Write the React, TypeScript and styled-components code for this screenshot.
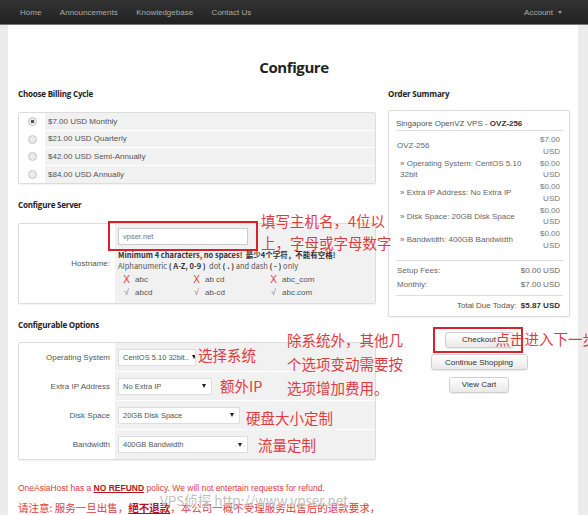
import React from 'react'
import styled, { createGlobalStyle } from 'styled-components'

const GlobalStyle = createGlobalStyle`
  html, body {
    margin: 0;
    padding: 0;
    background: #ececec;
    overflow: hidden;
    font-family: "Liberation Sans", Arial, sans-serif;
  }
`

const CJK = `"Noto Sans CJK SC", "Liberation Sans", sans-serif`

const Nav = styled.nav`
  height: 24px;
  background: linear-gradient(#333, #222);
  border-bottom: 1px solid #777;
  display: flex;
  align-items: center;
  padding: 0 26px 0 20px;
  gap: 18.5px;
  font-size: 8px;
  color: #aaa;
`

const NavItem = styled.span<{ $push?: boolean }>`
  margin-left: ${({ $push }) => ($push ? 'auto' : '0')};
  display: flex;
  align-items: center;
  gap: 5px;
`

const Caret = styled.span`
  width: 0;
  height: 0;
  border-left: 2.5px solid transparent;
  border-right: 2.5px solid transparent;
  border-top: 3px solid #999;
`

const Panel = styled.main`
  position: relative;
  width: 570px;
  margin-left: 8px;
  background: #fff;
  padding: 0 8px 40px 10px;
  box-sizing: border-box;
`

const Title = styled.h1`
  margin: 0;
  padding-top: 32px;
  text-align: center;
  font-family: "Open Sans", sans-serif;
  font-size: 15px;
  line-height: 20px;
  font-weight: 700;
  letter-spacing: -0.4px;
  color: #222;
`

const Columns = styled.div`
  display: grid;
  grid-template-columns: 358px 182px;
  column-gap: 12px;
  margin-top: 11px;
  align-items: start;
`

const Column = styled.div`
  display: flex;
  flex-direction: column;
`

const SectionTitle = styled.h3<{ $gap?: number }>`
  margin: ${({ $gap }) => $gap ?? 0}px 0 0;
  font-family: "Open Sans", sans-serif;
  font-size: 8px;
  line-height: 12px;
  font-weight: 700;
  letter-spacing: -0.2px;
  color: #222;
`

const Box = styled.div<{ $gap: number }>`
  position: relative;
  margin-top: ${({ $gap }) => $gap}px;
  border: 1px solid #dcdcdc;
  border-radius: 2px;
  box-shadow: 0 1px 2px rgba(0, 0, 0, 0.06);
  background: #fff;
`

const Row = styled.div<{ $h: number; $side: number }>`
  display: grid;
  grid-template-columns: ${({ $side }) => $side}px 1fr;
  height: ${({ $h }) => $h}px;
`

const SideCell = styled.div<{ $align?: string }>`
  display: flex;
  align-items: center;
  justify-content: ${({ $align }) => $align ?? 'flex-end'};
  padding-right: ${({ $align }) => ($align ? 0 : 5)}px;
  font-size: 8px;
  color: #555;
`

const MainCell = styled.div<{ $last?: boolean }>`
  background: #f1f1f1;
  border-bottom: ${({ $last }) => ($last ? 'none' : '1px solid #fff')};
  display: flex;
  align-items: center;
  padding-left: 3px;
  font-size: 8px;
  color: #555;
  gap: 6px;
`

const Radio = styled.span<{ $on?: boolean }>`
  width: 7px;
  height: 7px;
  border-radius: 50%;
  border: 1px solid #c4c4c4;
  background: radial-gradient(circle, ${({ $on }) => ($on ? '#555 0 1.6px, #e8e8e8 2px' : '#eee 0, #e4e4e4 100%')});
`

const HostCell = styled.div`
  background: #f1f1f1;
  padding: 4px 0 0 3px;
  font-size: 8px;
  color: #555;
`

const TextInput = styled.div`
  width: 130px;
  height: 17px;
  box-sizing: border-box;
  border: 1px solid #ccc;
  background: #fff;
  display: flex;
  align-items: center;
  padding-left: 4px;
  color: #777;
  font-size: 7.5px;
  margin-bottom: 4px;
`

const Hint = styled.div<{ $bold?: boolean }>`
  line-height: 11px;
  font-weight: ${({ $bold }) => ($bold ? 700 : 400)};
  color: ${({ $bold }) => ($bold ? '#333' : '#555')};
  font-family: ${CJK};
  font-size: 7.5px;
  b { color: #333; }
`

const Rules = styled.div`
  display: grid;
  grid-template-columns: 70px 77px auto;
  margin-top: 2px;
  line-height: 13px;
`

const Rule = styled.span`
  display: flex;
  align-items: center;
  font-size: 8px;
  color: #555;
`

const Mark = styled.span<{ $bad?: boolean }>`
  width: 17px;
  text-align: center;
  color: ${({ $bad }) => ($bad ? '#e03a3a' : '#888')};
  font-size: ${({ $bad }) => ($bad ? 10 : 9)}px;
`

const Select = styled.div<{ $w: number }>`
  width: ${({ $w }) => $w}px;
  height: 17px;
  box-sizing: border-box;
  border: 1px solid #ddd;
  background: #fff;
  display: flex;
  align-items: center;
  justify-content: space-between;
  gap: 3px;
  padding: 0 5px 0 4px;
  font-size: 7.5px;
  color: #555;
  white-space: nowrap;
  overflow: hidden;
  flex-shrink: 0;
`

const SelectArrow = styled.span`
  width: 0;
  height: 0;
  flex-shrink: 0;
  border-left: 2.5px solid transparent;
  border-right: 2.5px solid transparent;
  border-top: 4px solid #222;
`

const Note = styled.span<{ $shift?: number; $lead?: number }>`
  font-family: ${CJK};
  font-size: 14.5px;
  line-height: 24px;
  color: #df3b3f;
  white-space: nowrap;
  margin-left: ${({ $lead }) => $lead ?? 0}px;
  position: relative;
  top: ${({ $shift }) => $shift ?? 0}px;
`

const NoteBlock = styled.div<{ $x: number; $y: number; $lh: number }>`
  position: absolute;
  left: ${({ $x }) => $x}px;
  top: ${({ $y }) => $y}px;
  z-index: 3;
  display: flex;
  flex-direction: column;
  font-family: ${CJK};
  font-size: 14.5px;
  line-height: ${({ $lh }) => $lh}px;
  color: #df3b3f;
  white-space: nowrap;
`

const RedFrame = styled.div<{ $x: number; $y: number; $w: number; $h: number }>`
  position: absolute;
  left: ${({ $x }) => $x}px;
  top: ${({ $y }) => $y}px;
  width: ${({ $w }) => $w}px;
  height: ${({ $h }) => $h}px;
  border: 2px solid #d6232a;
  box-sizing: border-box;
  z-index: 3;
`

const Summary = styled.div`
  padding: 0 6px 0 7px;
  font-size: 8px;
  color: #666;
`

const SummaryHead = styled.div`
  padding: 8px 0 0 0;
  height: 20px;
  box-sizing: border-box;
  border-bottom: 1px solid #ddd;
  font-size: 8px;
  color: #555;
  b { color: #333; }
`

const Items = styled.div`
  padding: 3px 0 8px;
  border-bottom: 1px solid #ddd;
`

const Item = styled.div<{ $sub?: boolean }>`
  display: grid;
  grid-template-columns: 1fr 34px;
  align-items: center;
  height: 23.5px;
  padding-left: ${({ $sub }) => ($sub ? 4 : 1)}px;
  padding-right: 3px;
  line-height: 11.5px;
`

const Price = styled.span`
  text-align: right;
  color: #777;
`

const Totals = styled.div`
  padding: 3px 3px 3px 1px;
  border-bottom: 1px solid #ddd;
`

const TotalRow = styled.div`
  display: flex;
  justify-content: space-between;
  line-height: 14px;
`

const DueRow = styled.div`
  text-align: right;
  line-height: 20px;
  padding-right: 3px;
  color: #555;
  b { color: #333; }
`

const Actions = styled.div`
  margin-top: 15px;
  display: flex;
  flex-direction: column;
  align-items: center;
  gap: 6.5px;
`

const Button = styled.div<{ $w: number }>`
  position: relative;
  width: ${({ $w }) => $w}px;
  height: 16px;
  box-sizing: border-box;
  border: 1px solid #cfcfcf;
  border-radius: 3px;
  background: linear-gradient(#fff, #e9e9e9);
  box-shadow: 0 1px 1px rgba(0, 0, 0, 0.08);
  display: flex;
  align-items: center;
  justify-content: center;
  font-size: 8px;
  color: #333;
`

const CheckoutNote = styled.span`
  position: absolute;
  left: 50px;
  top: -5px;
  font-family: ${CJK};
  font-size: 14.5px;
  line-height: 22px;
  color: #df3b3f;
  white-space: nowrap;
  z-index: 3;
`

const Footer = styled.footer`
  position: relative;
  margin-top: 22px;
  color: #e03a3a;
  b, strong {
    color: #b5121b;
    text-decoration: underline;
  }
`

const FooterEn = styled.p`
  margin: 0;
  font-size: 8.5px;
  line-height: 12px;
`

const FooterCn = styled.p`
  margin: 6px 0 0;
  font-family: ${CJK};
  font-size: 10.5px;
  line-height: 16px;
  white-space: nowrap;
`

const Watermark = styled.span`
  position: absolute;
  left: 142px;
  top: 8px;
  font-family: ${CJK};
  font-size: 13.5px;
  color: rgba(170, 170, 170, 0.75);
  text-shadow: 0 0 1px #fff;
  white-space: nowrap;
`

const cycles = ['$7.00 USD Monthly', '$21.00 USD Quarterly', '$42.00 USD Semi-Annually', '$84.00 USD Annually']

const options = [
  { label: 'Operating System', value: 'CentOS 5.10 32bit..', w: 78, note: '选择系统', lead: 2, shift: -2 },
  { label: 'Extra IP Address', value: 'No Extra IP', w: 94, note: '额外IP', lead: 8, shift: 0 },
  { label: 'Disk Space', value: '20GB Disk Space', w: 122, note: '硬盘大小定制', lead: 6, shift: 3 },
  { label: 'Bandwidth', value: '400GB Bandwidth', w: 130, note: '流量定制', lead: 10, shift: 0 },
]

const lines = [
  { label: 'OVZ-256', price: '$7.00', sub: false },
  { label: '» Operating System: CentOS 5.10 32bit', price: '$0.00', sub: true },
  { label: '» Extra IP Address: No Extra IP', price: '$0.00', sub: true },
  { label: '» Disk Space: 20GB Disk Space', price: '$0.00', sub: true },
  { label: '» Bandwidth: 400GB Bandwidth', price: '$0.00', sub: true },
]

const rules: [boolean, string][] = [
  [true, 'abc'], [true, 'ab cd'], [true, 'abc_com'],
  [false, 'abcd'], [false, 'ab-cd'], [false, 'abc.com'],
]

export default function App() {
  return (
    <>
      <GlobalStyle />
      <Nav>
        <NavItem>Home</NavItem>
        <NavItem>Announcements</NavItem>
        <NavItem>Knowledgebase</NavItem>
        <NavItem>Contact Us</NavItem>
        <NavItem $push>Account <Caret /></NavItem>
      </Nav>
      <Panel>
        <Title>Configure</Title>
        <Columns>
          <Column>
            <SectionTitle>Choose Billing Cycle</SectionTitle>
            <Box $gap={12}>
              {cycles.map((c, i) => (
                <Row key={c} $h={17.5} $side={26}>
                  <SideCell $align="center"><Radio $on={i === 0} /></SideCell>
                  <MainCell $last={i === cycles.length - 1}>{c}</MainCell>
                </Row>
              ))}
            </Box>

            <SectionTitle $gap={15}>Configure Server</SectionTitle>
            <Box $gap={12}>
              <Row $h={79} $side={96}>
                <SideCell>Hostname:</SideCell>
                <HostCell>
                  <TextInput>vpser.net</TextInput>
                  <Hint $bold>Minimum 4 characters, no spaces!&nbsp; 最少4个字符，不能有空格!</Hint>
                  <Hint>Alphanumeric <b>( A-Z, 0-9 )</b>&nbsp; dot <b>( . )</b> and dash <b>( - )</b> only</Hint>
                  <Rules>
                    {rules.map(([bad, t]) => (
                      <Rule key={t}><Mark $bad={bad}>{bad ? 'X' : '√'}</Mark>{t}</Rule>
                    ))}
                  </Rules>
                </HostCell>
              </Row>
              <RedFrame $x={89} $y={-3} $w={150} $h={30} />
              <NoteBlock $x={242} $y={-14} $lh={22}>
                <span>填写主机名，4位以</span>
                <span>上，字母或字母数字</span>
              </NoteBlock>
            </Box>

            <SectionTitle $gap={15}>Configurable Options</SectionTitle>
            <Box $gap={11}>
              {options.map((o, i) => (
                <Row key={o.label} $h={29} $side={96}>
                  <SideCell>{o.label}</SideCell>
                  <MainCell $last={i === options.length - 1}>
                    <Select $w={o.w}>{o.value}<SelectArrow /></Select>
                    <Note $lead={o.lead - 6} $shift={o.shift}>{o.note}</Note>
                  </MainCell>
                </Row>
              ))}
              <NoteBlock $x={268} $y={-15} $lh={24}>
                <span>除系统外，其他几</span>
                <span>个选项变动需要按</span>
                <span>选项增加费用。</span>
              </NoteBlock>
            </Box>
          </Column>

          <Column>
            <SectionTitle>Order Summary</SectionTitle>
            <Box $gap={10}>
              <Summary>
                <SummaryHead>Singapore OpenVZ VPS - <b>OVZ-256</b></SummaryHead>
                <Items>
                  {lines.map((l) => (
                    <Item key={l.label} $sub={l.sub}>
                      <span>{l.label}</span>
                      <Price>{l.price}<br />USD</Price>
                    </Item>
                  ))}
                </Items>
                <Totals>
                  <TotalRow><span>Setup Fees:</span><span>$0.00 USD</span></TotalRow>
                  <TotalRow><span>Monthly:</span><span>$7.00 USD</span></TotalRow>
                </Totals>
                <DueRow>Total Due Today:&nbsp; <b>$5.87 USD</b></DueRow>
              </Summary>
            </Box>
            <Actions>
              <Button $w={69}>
                Checkout
                <RedFrame $x={-13} $y={-6} $w={90} $h={26} />
                <CheckoutNote>点击进入下一步</CheckoutNote>
              </Button>
              <Button $w={97}>Continue Shopping</Button>
              <Button $w={60}>View Cart</Button>
            </Actions>
          </Column>
        </Columns>

        <Footer>
          <FooterEn>OneAsiaHost has a <b>NO REFUND</b> policy. We will not entertain requests for refund.</FooterEn>
          <FooterCn>请注意: 服务一旦出售，<strong>絕不退款</strong>，本公司一概不受理服务出售后的退款要求，</FooterCn>
          <Watermark>VPS侦探 http://www.vpser.net</Watermark>
        </Footer>
      </Panel>
    </>
  )
}
